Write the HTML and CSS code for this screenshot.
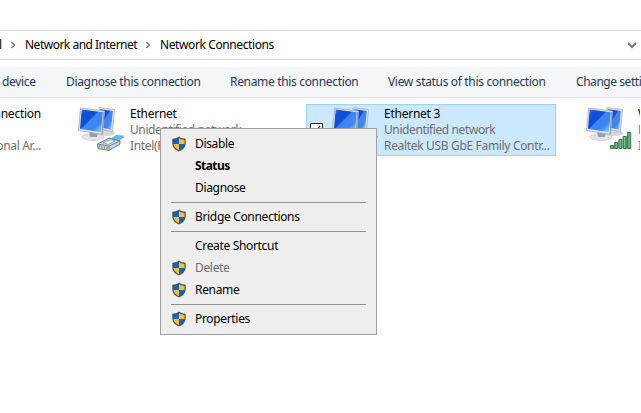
FILE: index.html
```html
<!DOCTYPE html>
<html lang="en">
<head>
<meta charset="utf-8">
<title>Network Connections</title>
<link rel="stylesheet" href="styles.css">
</head>
<body>
<svg class="defs" width="0" height="0" aria-hidden="true">
  <defs>
    <linearGradient id="screen" x1="0" y1="0" x2="1" y2="1">
      <stop offset="0" stop-color="#3c8cf4"/><stop offset=".15" stop-color="#1254dc"/><stop offset=".42" stop-color="#0f4cd4"/>
      <stop offset=".47" stop-color="#3c88f2"/><stop offset=".72" stop-color="#3a86f2"/><stop offset="1" stop-color="#a8dcff"/>
    </linearGradient>
    <linearGradient id="bar" x1="0" y1="0" x2="1" y2="0">
      <stop offset="0" stop-color="#2c7d4b"/><stop offset=".5" stop-color="#8cc79c"/><stop offset="1" stop-color="#277646"/>
    </linearGradient>
    <symbol id="shield" viewBox="0 0 16 16">
      <path d="M8 .5C6.200 2 3.600 2.700 1.300 2.700V7C1.300 11.200 4 13.900 8 15.500C12 13.900 14.700 11.200 14.700 7V2.700C12.400 2.700 9.800 2 8 .5Z" fill="#4b4e52"/>
      <path d="M8 2V8H2.500V3.900C4.500 3.800 6.500 3.100 8 2Z" fill="#0a66cf"/>
      <path d="M8 2V8H13.500V3.900C11.500 3.800 9.500 3.100 8 2Z" fill="#ffbd37"/>
      <path d="M2.500 8H8V14.200C4.800 12.800 2.700 10.800 2.500 8Z" fill="#ffbd37"/>
      <path d="M13.500 8H8V14.200C11.200 12.800 13.300 10.800 13.500 8Z" fill="#0a66cf"/>
    </symbol>
    <symbol id="monitors" viewBox="0 0 48 48">
      <ellipse cx="30" cy="27" rx="8" ry="3" fill="#d5d7da"/>
      <path d="M22 1.500L37.500 3.500L35.500 26L21 22.500Z" fill="#d9dcdf" stroke="#a9adb1" stroke-width=".7"/>
      <path d="M23 3.200L35.700 5L34 23.800L22 21Z" fill="url(#screen)"/>
      <ellipse cx="16" cy="31" rx="11" ry="3.300" fill="#e3e5e7" stroke="#bfc2c5" stroke-width=".7"/>
      <path d="M12 24L21 26L20 31H13Z" fill="#9b9fa4"/>
      <path d="M3.500 2L27.500 5L25.500 28.500L1.500 24.500Z" fill="#e1e3e5" stroke="#a6aaae" stroke-width=".8"/>
      <path d="M4.700 3.500L25.700 6.200L24 26.300L3 22.800Z" fill="url(#screen)"/>
      <path d="M26.700 6L25 28" stroke="#85898e" stroke-width=".8"/>
    </symbol>
    <symbol id="plug" viewBox="0 0 48 48">
      <path d="M37 34C40 33 42 32 46 30.500" fill="none" stroke="#2fa5d3" stroke-width="2.800"/>
      <path d="M35 32L40 29L46.500 30.500L41 35.500Z" fill="#65bfe2" stroke="#4da5c4" stroke-width=".6"/>
      <path d="M20.500 38L32 32L43 35L43 38L32 44.500L21 42.500Z" fill="#c6d5e0" stroke="#60788c" stroke-width=".9"/>
      <path d="M20.500 38L32 40.200L43 35M32 40V44.500" fill="none" stroke="#60788c" stroke-width=".8"/>
      <path d="M26 36.500L34 33.500L38 35L31 38.500Z" fill="#eff5f8" stroke="#60788c" stroke-width=".6"/>
      <path d="M22.500 39V42M25 39.500V42.500M27.500 40V43M30 40.500V43.500" stroke="#b59b42" stroke-width="1.200"/>
    </symbol>
    <symbol id="signal" viewBox="0 0 48 48">
      <g fill="url(#bar)" stroke="#277443" stroke-width=".9">
        <path d="M25.500 39.500H28.500V42.500H25.500Z"/><path d="M29.700 36.500H32.700V42.500H29.700Z"/><path d="M33.900 33.500H36.900V42.500H33.900Z"/><path d="M38.100 30.500H41.300V42.500H38.100Z"/><path d="M42.500 26.500H45.700V42.500H42.500Z"/>
      </g>
    </symbol>
  </defs>
</svg>

<nav class="address">
  <span class="crumb root">l</span>
  <svg class="sep" viewBox="0 0 6 8"><path d="M1.300 1L4.400 4L1.300 7"/></svg>
  <span class="crumb network">Network and Internet</span>
  <svg class="sep" viewBox="0 0 6 8"><path d="M1.300 1L4.400 4L1.300 7"/></svg>
  <span class="crumb">Network Connections</span>
  <svg class="drop" viewBox="0 0 10 7"><path d="M1 1L5 5L9 1"/></svg>
</nav>

<div class="toolbar">
  <span class="cmd device">device</span>
  <span class="cmd diagnose">Diagnose this connection</span>
  <span class="cmd rename">Rename this connection</span>
  <span class="cmd view">View status of this connection</span>
  <span class="cmd change">Change settings</span>
</div>

<main class="tiles">
  <div class="tile clipped">
    <div class="text"><span class="name">onnection</span><span>&nbsp;</span><span>sonal Ar...</span></div>
  </div>
  <div class="tile">
    <svg class="icon" viewBox="0 0 48 48"><use href="#monitors"/><use href="#plug"/></svg>
    <div class="text"><span class="name">Ethernet</span><span class="status">Unidentified network</span><span>Intel(R)</span></div>
  </div>
  <div class="tile selected">
    <svg class="check" viewBox="0 0 13 13"><path d="M.5 .5H12.500V12.500H.5Z" fill="#fff" stroke="#222"/><path d="M3 6L5.500 9L10 3" fill="none" stroke="#222" stroke-width="1.300"/></svg>
    <svg class="icon" viewBox="0 0 48 48"><use href="#monitors"/><use href="#plug"/></svg>
    <div class="text"><span class="name">Ethernet 3</span><span class="status">Unidentified network</span><span>Realtek USB GbE Family Contr...</span></div>
  </div>
  <div class="tile last">
    <svg class="icon" viewBox="0 0 48 48"><use href="#monitors"/><use href="#signal"/></svg>
    <div class="text"><span class="name">Wi-Fi</span><span>Not connected</span><span>Intel(R)</span></div>
  </div>
</main>

<div class="menu">
  <div class="item"><svg class="shield"><use href="#shield"/></svg><span>Disable</span></div>
  <div class="item default"><span>Status</span></div>
  <div class="item"><span>Diagnose</span></div>
  <div class="rule"></div>
  <div class="item"><svg class="shield"><use href="#shield"/></svg><span>Bridge Connections</span></div>
  <div class="rule"></div>
  <div class="item"><span>Create Shortcut</span></div>
  <div class="item disabled"><svg class="shield"><use href="#shield"/></svg><span>Delete</span></div>
  <div class="item"><svg class="shield"><use href="#shield"/></svg><span>Rename</span></div>
  <div class="rule"></div>
  <div class="item"><svg class="shield"><use href="#shield"/></svg><span>Properties</span></div>
</div>
</body>
</html>
```
FILE: styles.css
```css
* { box-sizing: border-box; }
body {
  margin: 0;
  padding-top: 30px;
  width: 641px;
  height: 413px;
  overflow: hidden;
  position: relative;
  background: #fff;
  color: #000;
  font: 12px/16px "Noto Sans", "Open Sans", sans-serif;
  letter-spacing: -0.33px;
  white-space: nowrap;
}
.defs { position: absolute; }
.address {
  display: flex;
  align-items: center;
  height: 30px;
  border-top: 1px solid #d9d9d9;
  border-bottom: 1px solid #d9d9d9;
}
.crumb { flex: none; letter-spacing: -0.4px; }
.root { width: 11px; margin-left: -1px; }
.network { width: 120px; letter-spacing: -0.5px; }
.sep { width: 6px; height: 8px; margin-right: 9px; fill: none; stroke: #777; stroke-width: 1.5; }
.drop { width: 10px; height: 7px; margin-left: auto; margin-right: 4px; fill: none; stroke: #777; stroke-width: 2; }
.toolbar {
  display: flex;
  align-items: center;
  height: 31px;
  margin-top: 7px;
  padding-left: 2px;
  background: #f5f6f7;
  border-bottom: 1px solid #e5e7e9;
  color: #1e395b;
  overflow: hidden;
}
.cmd { flex: none; }
.device { width: 64px; }
.diagnose { width: 164px; }
.rename { width: 158px; }
.view { width: 188px; }
.change { letter-spacing: -0.45px; }
.tiles { display: flex; gap: 4px; margin-top: 6px; overflow: hidden; }
.tile {
  flex: none;
  display: flex;
  position: relative;
  width: 250px;
  height: 52px;
  padding: 1px 0 0 24px;
  border: 1px solid transparent;
}
.clipped { width: 48px; padding-left: 0; justify-content: flex-end; padding-right: 6px; text-align: right; }
.last { width: 81px; overflow: hidden; }
.selected { background: #cce8ff; border-color: #99d1ff; }
.icon { flex: none; width: 48px; height: 48px; margin-right: 5px; }
.check { position: absolute; left: 3px; top: 18px; width: 13px; height: 13px; }
.text { display: flex; flex-direction: column; color: #6d6d6d; }
.name { color: #000; letter-spacing: -0.25px; }
.status { letter-spacing: -0.4px; }
.menu {
  position: absolute;
  left: 160px;
  top: 128px;
  width: 217px;
  padding: 4px 10px;
  border: 1px solid #a0a0a0;
  background: #eee;
}
.item { display: flex; align-items: center; height: 22px; padding-left: 24px; }
.shield { flex: none; width: 16px; height: 16px; margin: 0 8px 0 -24px; }
.default { font-weight: 700; letter-spacing: -0.55px; }
.disabled { color: #6d6d6d; }
.rule { height: 1px; margin: 3px 0; background: #919191; }
```
